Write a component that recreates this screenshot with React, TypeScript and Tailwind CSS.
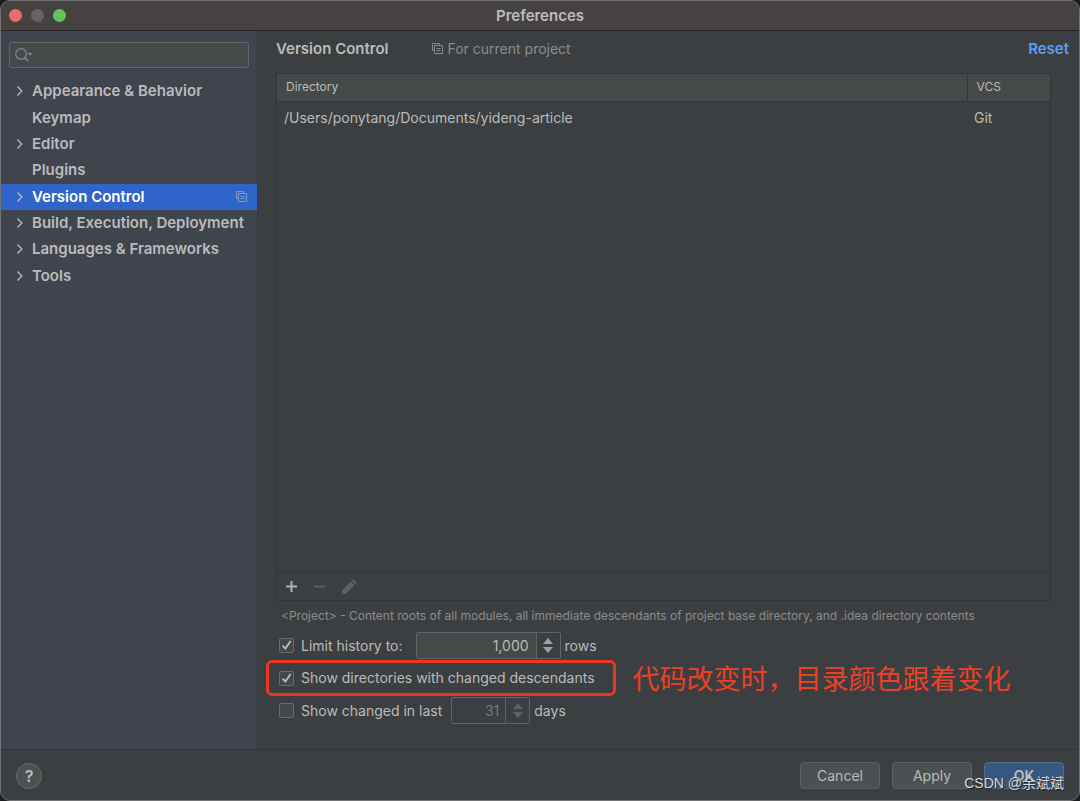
import { useState } from "react";

const navItems = [
  { label: "Appearance & Behavior", expandable: true },
  { label: "Keymap", expandable: false },
  { label: "Editor", expandable: true },
  { label: "Plugins", expandable: false },
  { label: "Version Control", expandable: true },
  { label: "Build, Execution, Deployment", expandable: true },
  { label: "Languages & Frameworks", expandable: true },
  { label: "Tools", expandable: true },
];

const mappings = [
  { directory: "/Users/ponytang/Documents/yideng-article", vcs: "Git" },
];

function ProjectIcon({ className }: { className?: string }) {
  return (
    <svg viewBox="0 0 11 11" className={className} fill="none" stroke="currentColor">
      <path d="M2.5 7.5h-2v-7h7v2" />
      <path d="M2.5 2.5h8v8h-8z" />
      <path d="M4.5 5.5h4M4.5 7.5h4" />
    </svg>
  );
}

function Sidebar() {
  const [selected, setSelected] = useState("Version Control");

  return (
    <aside className="flex w-[257px] shrink-0 flex-col border-r border-[#36393b] bg-[#40444d] pt-[11px]">
      <div className="relative mx-2 mb-[10px]">
        <svg
          viewBox="0 0 20 16"
          className="absolute left-[5px] top-[5px] h-4 w-5"
          fill="none"
          stroke="#7f8b91"
          strokeWidth="1.2"
        >
          <circle cx="7" cy="7" r="5.3" />
          <path d="M10.8 10.8l3.4 3.4" strokeWidth="1.5" />
          <path d="M13.5 6h5L16 8.8z" fill="#7f8b91" stroke="none" />
        </svg>
        <input
          type="text"
          aria-label="Search settings"
          className="block h-[26px] w-full rounded-[3px] border border-[#646768] bg-[#45494a] pl-8 pr-2 text-sm text-[#bbbbbb] outline-none"
        />
      </div>
      <ul className="flex h-[211px] flex-col">
        {navItems.map((item) => (
          <li key={item.label} className="flex flex-1">
            <button
              type="button"
              onClick={() => setSelected(item.label)}
              className={`flex w-full items-center whitespace-nowrap pl-[14px] pr-[10px] text-left text-[15px] leading-5 font-semibold ${
                item.label === selected ? "bg-[#2f65ca] text-white" : "text-[#bbbbbb]"
              }`}
            >
              <span className="w-[17px] shrink-0">
                {item.expandable && (
                  <svg viewBox="0 0 10 10" className="h-[10px] w-[10px]" fill="none" stroke="#b4b6b9" strokeWidth="1.4">
                    <path d="M2.5 0.5l4.3 4.5-4.3 4.5" />
                  </svg>
                )}
              </span>
              <span className="flex-1">{item.label}</span>
              {item.label === selected && (
                <ProjectIcon className="h-[11px] w-[11px] text-[#7f9acb]" />
              )}
            </button>
          </li>
        ))}
      </ul>
    </aside>
  );
}

function MappingTable() {
  return (
    <div className="mr-[18px] flex flex-1 flex-col border border-[#323435]">
      <div className="flex-1">
        <table className="w-full table-fixed text-left text-[#bbbbbb]">
          <thead>
            <tr className="h-[27px] border-b border-[#353839] bg-[#45494a] text-xs">
              <th className="pl-[9px] font-normal">Directory</th>
              <th className="w-[83px] border-l border-[#353839] pl-[9px] font-normal">VCS</th>
            </tr>
          </thead>
          <tbody>
            {mappings.map((m) => (
              <tr key={m.directory} className="h-[34px] text-sm">
                <td className="pl-[7px]">{m.directory}</td>
                <td className="pl-[7px]">{m.vcs}</td>
              </tr>
            ))}
          </tbody>
        </table>
      </div>
      <div className="flex h-7 items-center gap-[15px] border-t border-[#323435] pl-2">
        <button type="button" aria-label="Add">
          <svg viewBox="0 0 13 13" className="h-[13px] w-[13px]" stroke="#afb1b3" strokeWidth="2">
            <path d="M6.5 1v11M1 6.5h11" />
          </svg>
        </button>
        <button type="button" aria-label="Remove" disabled>
          <svg viewBox="0 0 13 13" className="h-[13px] w-[13px]" stroke="#5c5e60" strokeWidth="2">
            <path d="M1 6.5h11" />
          </svg>
        </button>
        <button type="button" aria-label="Edit" disabled>
          <svg viewBox="0 0 16 16" className="h-4 w-4" fill="#5f6163">
            <path d="M1 15v-3.6L9.8 2.7l3.5 3.5L4.6 15z" />
            <path d="M10.7 1.8l.9-.9q.7-.6 1.4 0l2.1 2.1q.6.7 0 1.4l-.9.9z" />
          </svg>
        </button>
      </div>
    </div>
  );
}

interface CheckOptionProps {
  label: string;
  defaultChecked?: boolean;
}

function CheckOption({ label, defaultChecked }: CheckOptionProps) {
  return (
    <label className="flex items-center gap-[7px] whitespace-nowrap">
      <span className="relative h-[15px] w-[15px]">
        <input
          type="checkbox"
          defaultChecked={defaultChecked}
          className="peer block h-[15px] w-[15px] appearance-none rounded-[2px] border border-[#6b6b6b] bg-[#43494a]"
        />
        <svg
          viewBox="0 0 15 15"
          className="pointer-events-none absolute inset-0 hidden peer-checked:block"
          fill="none"
          stroke="#bbbbbb"
          strokeWidth="1.9"
        >
          <path d="M3.6 7.6l2.8 3L11.6 3" />
        </svg>
      </span>
      {label}
    </label>
  );
}

interface SpinnerProps {
  label: string;
  value: string;
  inputClass: string;
  disabled?: boolean;
}

function Spinner({ label, value, inputClass, disabled }: SpinnerProps) {
  const arrow = disabled ? "#5f6163" : "#9fa2a4";

  return (
    <div
      className={`flex h-[27px] rounded-[2px] border border-[#646464] ${
        disabled ? "text-[#777777]" : "bg-[#45494a] text-[#bbbbbb]"
      }`}
    >
      <input
        type="text"
        aria-label={label}
        defaultValue={value}
        disabled={disabled}
        className={`bg-transparent text-right outline-none ${inputClass}`}
      />
      <div className="flex w-6 flex-col items-center justify-center gap-[3px] border-l border-[#646464] bg-[#3c3f41]">
        <button type="button" aria-label={`Increase ${label}`} disabled={disabled}>
          <svg viewBox="0 0 10 6" className="block h-[6px] w-[10px]" fill={arrow}>
            <path d="M0 6h10L5 0z" />
          </svg>
        </button>
        <button type="button" aria-label={`Decrease ${label}`} disabled={disabled}>
          <svg viewBox="0 0 10 6" className="block h-[6px] w-[10px]" fill={arrow}>
            <path d="M0 0h10L5 6z" />
          </svg>
        </button>
      </div>
    </div>
  );
}

function VersionControlPanel() {
  return (
    <main className="flex min-w-0 flex-1 flex-col bg-[#3c3f41] pl-[18px] pr-[10px] text-sm text-[#bbbbbb]">
      <div className="flex h-[35px] items-center">
        <h2 className="text-[15px] leading-5 font-semibold">Version Control</h2>
        <div className="ml-11 flex items-center gap-1 text-[#8c8c8c]">
          <ProjectIcon className="h-[11px] w-[11px] text-[#7f8b91]" />
          For current project
        </div>
        <button type="button" className="ml-auto text-[15px] leading-5 font-semibold text-[#589df6]">
          Reset
        </button>
      </div>
      <div className="flex flex-1 pt-[7px]">
        <MappingTable />
      </div>
      <p className="pl-[5px] pt-[6px] text-xs leading-[18px] text-[#8c8c8c]">
        &lt;Project&gt; - Content roots of all modules, all immediate descendants of project base
        directory, and .idea directory contents
      </p>
      <div className="flex flex-col gap-[6px] pb-[25px] pl-[3px] pt-[7px]">
        <div className="flex h-[27px] items-center">
          <CheckOption label="Limit history to:" defaultChecked />
          <div className="ml-[13px] mr-1 flex">
            <Spinner label="history rows" value="1,000" inputClass="w-[119px] pr-[7px]" />
          </div>
          rows
        </div>
        <div className="flex h-[26px] items-center">
          <div className="relative pr-2">
            <CheckOption label="Show directories with changed descendants" defaultChecked />
            <div className="pointer-events-none absolute -inset-x-[13px] -inset-y-2 rounded-md border-3 border-[#ee3423]" />
          </div>
          <span className="ml-[30px] whitespace-nowrap font-['Noto_Sans_CJK_SC',sans-serif] text-[27px] leading-[26px] text-[#ee3f24]">
            代码改变时，目录颜色跟着变化
          </span>
        </div>
        <div className="flex h-[27px] items-center">
          <CheckOption label="Show changed in last" />
          <div className="ml-[9px] mr-1 flex">
            <Spinner label="days" value="31" inputClass="w-[53px] pr-[6px]" disabled />
          </div>
          days
        </div>
      </div>
    </main>
  );
}

function Footer() {
  return (
    <footer className="relative flex h-[51px] shrink-0 items-center gap-3 border-t border-[#323435] bg-[#3c3f41] px-[15px] pt-px text-sm text-[#bbbbbb]">
      <button
        type="button"
        aria-label="Help"
        className="mr-auto h-[26px] w-[26px] rounded-full border border-[#666a6c] bg-[#4c5052] text-base font-semibold leading-6"
      >
        ?
      </button>
      <button type="button" className="h-[27px] w-20 rounded border border-[#5e6060] bg-[#4c5052]">
        Cancel
      </button>
      <button type="button" className="h-[27px] w-20 rounded border border-[#5e6060] bg-[#4c5052]">
        Apply
      </button>
      <button type="button" className="h-[27px] w-20 rounded border border-[#4c708c] bg-[#365880] font-semibold">
        OK
      </button>
      <span className="pointer-events-none absolute bottom-[7px] right-[15px] whitespace-nowrap font-['Liberation_Sans','Noto_Sans_CJK_SC',sans-serif] text-sm leading-5 text-[#d8dadc] [text-shadow:1px_1px_1px_#222]">
        CSDN @余斌斌
      </span>
    </footer>
  );
}

export default function App() {
  return (
    <div className="h-screen min-h-[480px] bg-[#1c1e20] font-[Inter,'Noto_Sans_CJK_SC',sans-serif]">
      <div className="flex h-full flex-col overflow-hidden rounded-[10px] border border-[#717374] bg-[#3c3f41]">
        <header className="relative flex h-[30px] shrink-0 items-center justify-center border-b border-[#232323] bg-[#474242]">
          <div className="absolute left-2 flex gap-[9px]">
            <button type="button" aria-label="Close" className="h-[13px] w-[13px] rounded-full bg-[#ed6b5f]" />
            <button type="button" aria-label="Minimize" className="h-[13px] w-[13px] rounded-full bg-[#686365]" />
            <button type="button" aria-label="Zoom" className="h-[13px] w-[13px] rounded-full bg-[#62c555]" />
          </div>
          <h1 className="text-[15px] font-semibold leading-5 text-[#bebcbc]">Preferences</h1>
        </header>
        <div className="flex min-h-0 flex-1">
          <Sidebar />
          <VersionControlPanel />
        </div>
        <Footer />
      </div>
    </div>
  );
}
